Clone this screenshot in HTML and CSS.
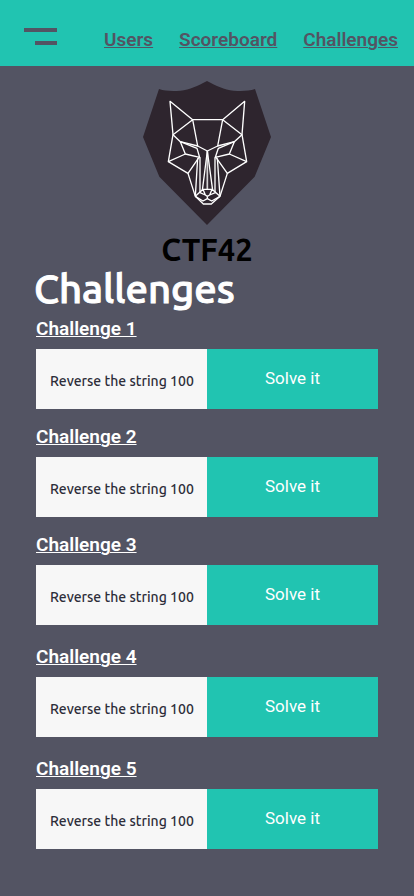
FILE: index.html
```html
<!DOCTYPE html>
<html lang="en">
<head>
<meta charset="utf-8">
<meta name="viewport" content="width=device-width, initial-scale=1">
<title>CTF42 Challenges</title>
<link rel="stylesheet" href="styles.css">
</head>
<body>
<header class="topbar">
  <button class="menu" type="button" aria-label="Menu">
    <span class="bar"></span>
    <span class="bar bar-short"></span>
  </button>
  <nav class="nav">
    <a href="#users">Users</a>
    <a href="#scoreboard">Scoreboard</a>
    <a href="#challenges">Challenges</a>
  </nav>
</header>
<main>
  <div class="brand">
    <svg class="logo" viewBox="18 18 384 432" aria-hidden="true">
      <path class="shield" d="M210 18C182 33 159 44 130 47C106 49 84 48 66 42L18 186L67 305L210 450L353 305L402 186L354 42C336 48 314 49 290 47C261 44 238 33 210 18Z"/>
      <g class="wolf">
        <path d="M99 79L167 134H257L323 79L315 179L329 260L271 295L249 364L223 387H199L175 364L153 295L94 260L108 179Z"/>
        <path d="M167 134L108 179L130 200L182 213L167 134M257 134L315 179L292 200L242 213L257 134"/>
        <path d="M130 200L180 220L188 247L145 237L130 200M292 200L244 220L235 247L277 237L292 200"/>
        <path d="M182 213L211 228L242 213"/>
        <path d="M94 260L145 237M329 260L277 237M153 295L184 250L188 247M271 295L239 250L235 247"/>
        <path d="M182 250L175 364M241 250L249 364M211 228L196 346M211 228L227 346"/>
        <path class="snout" d="M189 247V352M234 247V352M211 228V342"/>
        <path d="M175 364L198 343H225L249 364M198 343L205 360L211 364L218 360L225 343M189 353L205 360M235 353L218 360M175 364L198 378L211 371L224 378L249 364M211 364V371"/>
      </g>
    </svg>
    <p class="brand-name">CTF42</p>
  </div>
  <h1>Challenges</h1>
  <div class="challenges">
    <section>
      <h2><a href="#challenge-1">Challenge 1</a></h2>
      <div class="card"><p>Reverse the string 100</p><button type="button">Solve it</button></div>
    </section>
    <section>
      <h2><a href="#challenge-2">Challenge 2</a></h2>
      <div class="card"><p>Reverse the string 100</p><button type="button">Solve it</button></div>
    </section>
    <section>
      <h2><a href="#challenge-3">Challenge 3</a></h2>
      <div class="card"><p>Reverse the string 100</p><button type="button">Solve it</button></div>
    </section>
    <section class="spaced">
      <h2><a href="#challenge-4">Challenge 4</a></h2>
      <div class="card"><p>Reverse the string 100</p><button type="button">Solve it</button></div>
    </section>
    <section class="spaced">
      <h2><a href="#challenge-5">Challenge 5</a></h2>
      <div class="card"><p>Reverse the string 100</p><button type="button">Solve it</button></div>
    </section>
  </div>
</main>
</body>
</html>
```
FILE: styles.css
```css
* {
  box-sizing: border-box;
}

body {
  margin: 0;
  background: #535463;
  color: #fff;
  font-family: Roboto, "Liberation Sans", sans-serif;
}

h1, h2, p {
  margin: 0;
}

a {
  text-decoration-thickness: 1px;
}

.topbar {
  display: flex;
  justify-content: space-between;
  align-items: flex-start;
  padding: 28px 16px 14px 24px;
  background: #21c4b1;
}

.menu {
  display: flex;
  flex-direction: column;
  align-items: flex-end;
  gap: 9px;
  padding: 0;
  border: 0;
  background: none;
}

.bar {
  width: 33px;
  height: 4px;
  background: #535463;
}

.bar-short {
  width: 22px;
}

.nav {
  display: flex;
  gap: 26px;
}

.nav a {
  color: #535463;
  font-size: 19px;
  font-weight: 600;
  line-height: 24px;
}

.brand {
  display: flex;
  flex-direction: column;
  align-items: center;
  padding-top: 15px;
}

.logo {
  width: 128px;
  height: 144px;
}

.shield {
  fill: #2e252e;
}

.wolf {
  fill: none;
  stroke: #fff;
  stroke-width: 4;
  stroke-linejoin: round;
}

.snout {
  stroke-width: 5;
  opacity: 0.8;
}

.brand-name {
  padding-top: 8px;
  color: #000;
  font: 700 31px/34px Ubuntu, "Noto Sans", sans-serif;
}

h1 {
  padding: 0 34px 6px;
  font: 500 40px/44px Ubuntu, "Noto Sans", sans-serif;
  -webkit-text-stroke: 1px currentColor;
}

.challenges {
  padding: 0 36px 46px;
}

section + section {
  margin-top: 16px;
}

section + .spaced {
  margin-top: 20px;
}

h2 {
  margin-bottom: 8px;
  font-size: 19px;
  font-weight: 600;
  line-height: 24px;
}

h2 a {
  color: inherit;
}

.card {
  display: grid;
  grid-template-columns: 1fr 1fr;
  min-height: 60px;
}

.card p {
  padding: 20px 0 16px 14px;
  background: #f7f7f7;
  color: #2e2e3a;
  font: 500 14px/24px Ubuntu, "Noto Sans", sans-serif;
  white-space: nowrap;
}

.card button {
  padding: 0 0 2px;
  border: 0;
  background: #21c4b1;
  color: #fff;
  font: 400 17px/24px Roboto, "Liberation Sans", sans-serif;
}
```
